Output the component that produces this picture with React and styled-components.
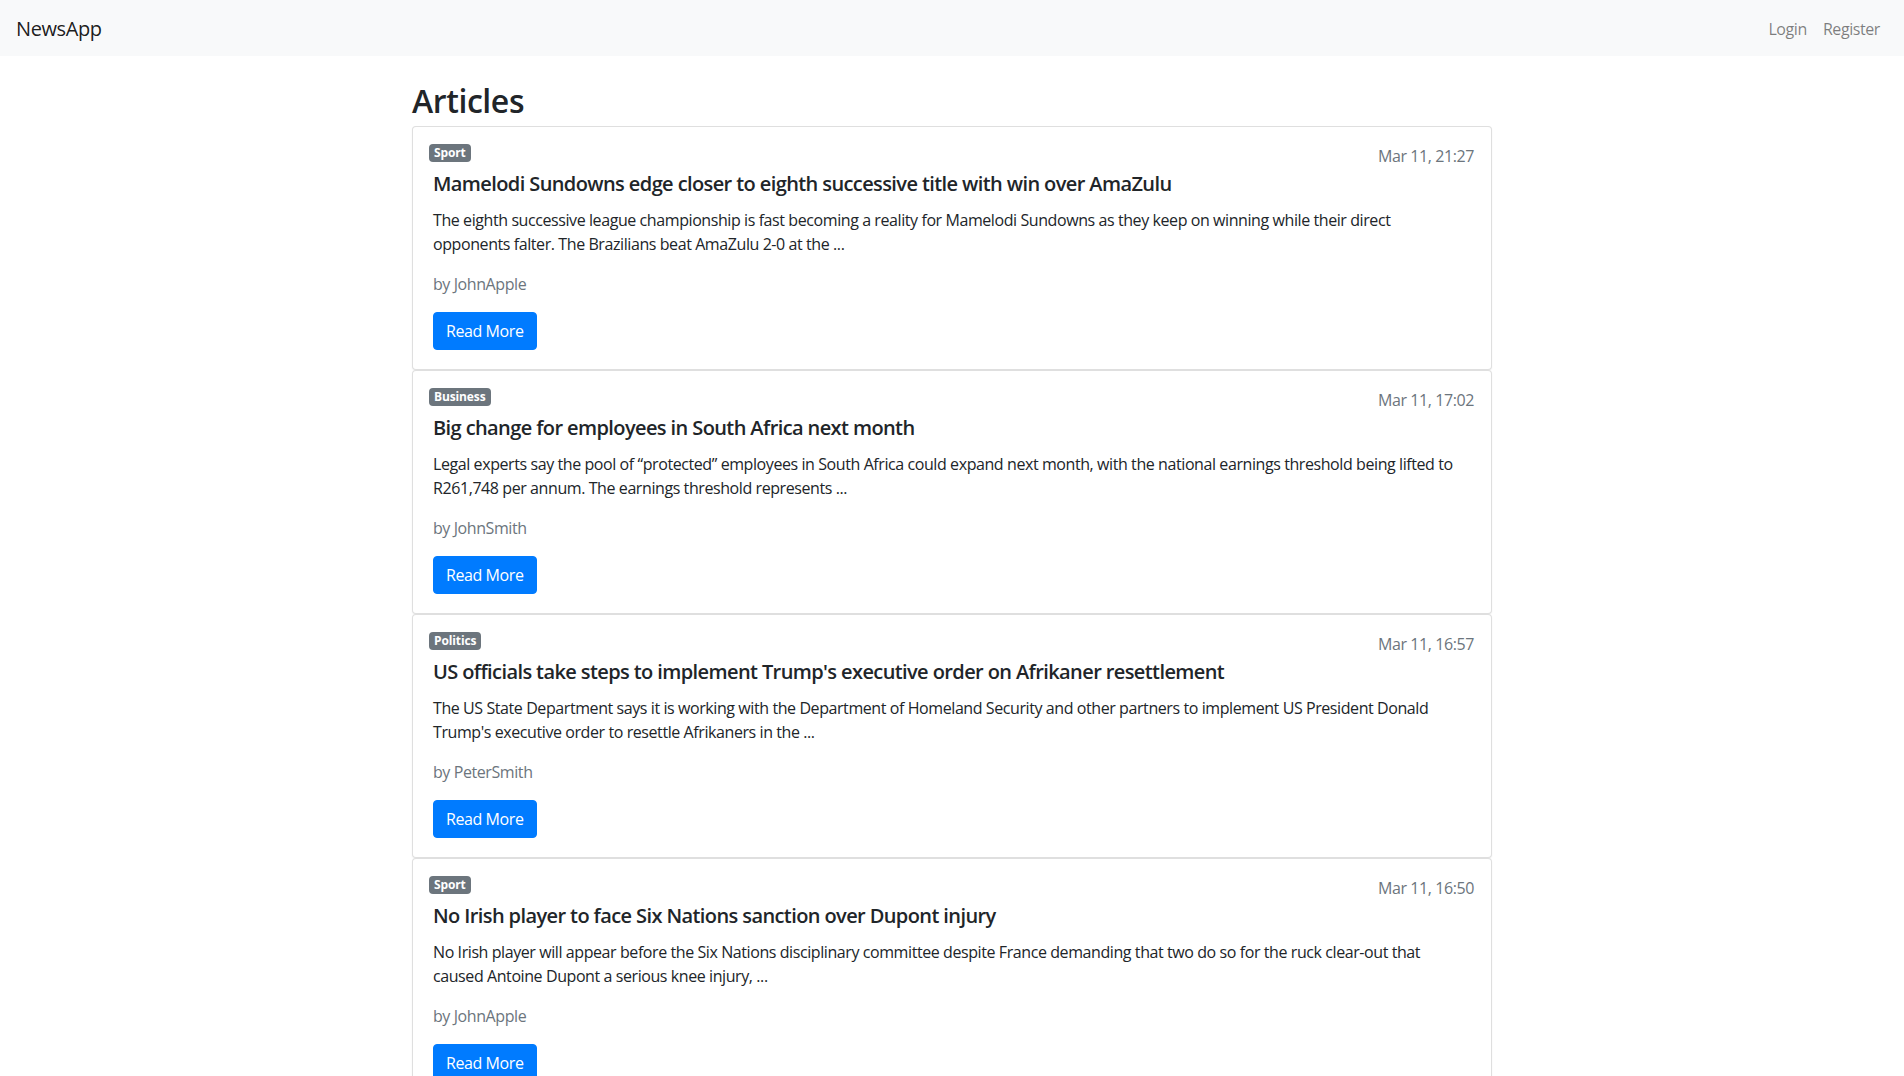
import React from "react";
import styled, { createGlobalStyle } from "styled-components";

const FONT = `"Open Sans", "Noto Sans", Arial, sans-serif`;

const GlobalStyle = createGlobalStyle`
  html, body {
    margin: 0;
    padding: 0;
    background: #ffffff;
    font-family: ${FONT};
    color: #212529;
    font-size: 16px;
    line-height: 1.5;
    letter-spacing: -0.026em;
  }
  * { box-sizing: border-box; }
`;

const Navbar = styled.nav`
  height: 56px;
  background: #f8f9fa;
  display: flex;
  align-items: center;
  justify-content: space-between;
  padding: 2px 16px 0;
`;

const Brand = styled.a`
  font-size: 20px;
  line-height: 30px;
  color: rgba(0, 0, 0, 0.9);
  text-decoration: none;
`;

const NavLinks = styled.div`
  display: flex;
  align-items: center;
`;

const NavLink = styled.a`
  font-size: 16px;
  line-height: 24px;
  color: rgba(0, 0, 0, 0.5);
  padding: 8px 8px;
  text-decoration: none;
`;

const Container = styled.main`
  width: 1080px;
  margin: 0 auto;
  padding-top: 26px;
`;

const Heading = styled.h2`
  font-size: 32px;
  font-weight: 600;
  line-height: 1.2;
  margin: 0 0 6px;
`;

const List = styled.div`
  display: flex;
  flex-direction: column;
`;

const Card = styled.article`
  border: 1px solid rgba(0, 0, 0, 0.125);
  border-radius: 4px;
  background: #fff;
  padding: 16px 16px 19px;
  box-shadow: 0 1px 2px rgba(0, 0, 0, 0.06);
`;

const CardTop = styled.div`
  display: flex;
  justify-content: space-between;
  align-items: flex-start;
`;

const Badge = styled.span`
  display: inline-block;
  background: #6c757d;
  color: #fff;
  font-size: 12px;
  font-weight: 700;
  line-height: 1;
  letter-spacing: -0.01em;
  padding: 3px 5px;
  border-radius: 4px;
  margin-top: 1px;
`;

const DateText = styled.span`
  font-size: 16px;
  line-height: 24px;
  color: #6c757d;
  margin-top: 1px;
  margin-right: 1px;
`;

const Body = styled.div`
  padding: 0 4px;
`;

const Title = styled.h5`
  font-size: 20px;
  font-weight: 600;
  line-height: 24px;
  letter-spacing: -0.03em;
  margin: 4px 0 12px;
`;

const Excerpt = styled.p`
  margin: 0 0 16px;
`;

const Author = styled.p`
  margin: 0 0 16px;
  color: #6c757d;
`;

const Button = styled.a`
  display: inline-block;
  background: #007bff;
  border: 1px solid #007bff;
  color: #fff;
  font-size: 16px;
  line-height: 24px;
  padding: 6px 12px;
  border-radius: 4px;
  text-decoration: none;
`;

const articles = [
  {
    category: "Sport",
    date: "Mar 11, 21:27",
    title: "Mamelodi Sundowns edge closer to eighth successive title with win over AmaZulu",
    excerpt:
      "The eighth successive league championship is fast becoming a reality for Mamelodi Sundowns as they keep on winning while their direct opponents falter. The Brazilians beat AmaZulu 2-0 at the ...",
    author: "JohnApple",
  },
  {
    category: "Business",
    date: "Mar 11, 17:02",
    title: "Big change for employees in South Africa next month",
    excerpt:
      "Legal experts say the pool of \u201cprotected\u201d employees in South Africa could expand next month, with the national earnings threshold being lifted to R261,748 per annum. The earnings threshold represents ...",
    author: "JohnSmith",
  },
  {
    category: "Politics",
    date: "Mar 11, 16:57",
    title: "US officials take steps to implement Trump's executive order on Afrikaner resettlement",
    excerpt:
      "The US State Department says it is working with the Department of Homeland Security and other partners to implement US President Donald Trump's executive order to resettle Afrikaners in the ...",
    author: "PeterSmith",
  },
  {
    category: "Sport",
    date: "Mar 11, 16:50",
    title: "No Irish player to face Six Nations sanction over Dupont injury",
    excerpt:
      "No Irish player will appear before the Six Nations disciplinary committee despite France demanding that two do so for the ruck clear-out that caused Antoine Dupont a serious knee injury, ...",
    author: "JohnApple",
  },
];

export default function App() {
  return (
    <>
      <GlobalStyle />
      <Navbar>
        <Brand href="#">NewsApp</Brand>
        <NavLinks>
          <NavLink href="#">Login</NavLink>
          <NavLink href="#">Register</NavLink>
        </NavLinks>
      </Navbar>
      <Container>
        <Heading>Articles</Heading>
        <List>
          {articles.map((a, i) => (
            <Card key={i}>
              <CardTop>
                <Badge>{a.category}</Badge>
                <DateText>{a.date}</DateText>
              </CardTop>
              <Body>
                <Title>{a.title}</Title>
                <Excerpt>{a.excerpt}</Excerpt>
                <Author>by {a.author}</Author>
                <Button href="#">Read More</Button>
              </Body>
            </Card>
          ))}
        </List>
      </Container>
    </>
  );
}
